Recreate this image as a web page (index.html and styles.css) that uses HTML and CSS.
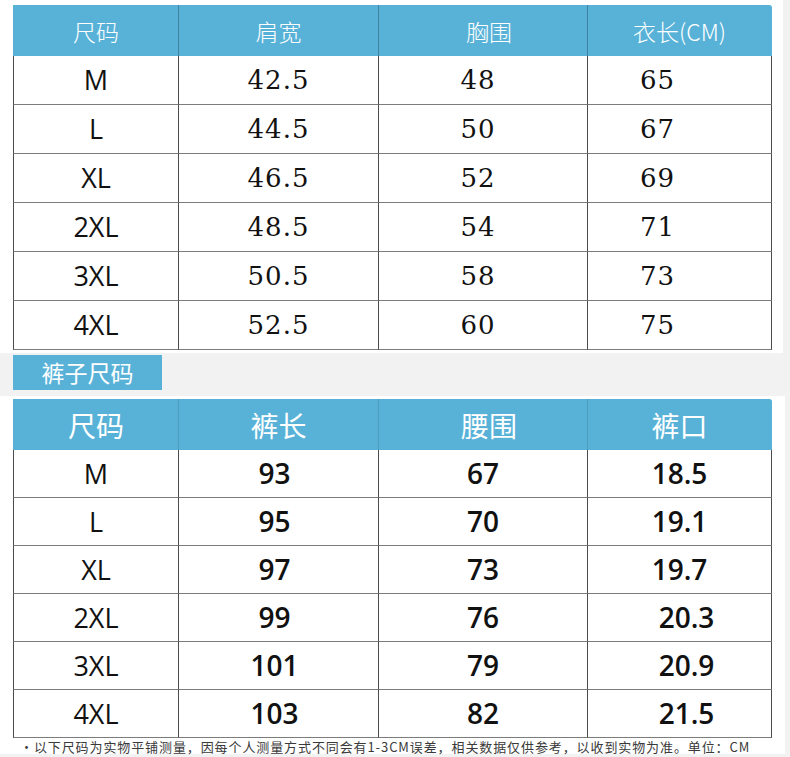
FILE: index.html
```html
<!DOCTYPE html>
<html lang="zh-CN">
<head>
<meta charset="utf-8">
<title>尺码表</title>
<link rel="stylesheet" href="styles.css">
</head>
<body>
<div class="sheet">
  <table class="grid top">
    <colgroup><col class="c1"><col class="c2"><col class="c3"><col class="c4"></colgroup>
    <thead>
      <tr><th>尺码</th><th>肩宽</th><th class="h3">胸围</th><th>衣长(CM)</th></tr>
    </thead>
    <tbody>
      <tr><td class="sz">M</td><td class="num">42.5</td><td class="num n3">48</td><td class="num n4">65</td></tr>
      <tr><td class="sz">L</td><td class="num">44.5</td><td class="num n3">50</td><td class="num n4">67</td></tr>
      <tr><td class="sz">XL</td><td class="num">46.5</td><td class="num n3">52</td><td class="num n4">69</td></tr>
      <tr><td class="sz">2XL</td><td class="num">48.5</td><td class="num n3">54</td><td class="num n4">71</td></tr>
      <tr><td class="sz">3XL</td><td class="num">50.5</td><td class="num n3">58</td><td class="num n4">73</td></tr>
      <tr><td class="sz">4XL</td><td class="num">52.5</td><td class="num n3">60</td><td class="num n4">75</td></tr>
    </tbody>
  </table>
</div>
<div class="label">裤子尺码</div>
<div class="sheet second">
  <table class="grid pants">
    <colgroup><col class="c1"><col class="c2"><col class="c3"><col class="c4"></colgroup>
    <thead>
      <tr><th>尺码</th><th>裤长</th><th class="h3">腰围</th><th>裤口</th></tr>
    </thead>
    <tbody>
      <tr><td class="sz">M</td><td class="val v2">93</td><td class="val">67</td><td class="val">18.5</td></tr>
      <tr><td class="sz">L</td><td class="val v2">95</td><td class="val">70</td><td class="val">19.1</td></tr>
      <tr><td class="sz">XL</td><td class="val v2">97</td><td class="val">73</td><td class="val">19.7</td></tr>
      <tr><td class="sz">2XL</td><td class="val v2">99</td><td class="val">76</td><td class="val v4">20.3</td></tr>
      <tr><td class="sz">3XL</td><td class="val v2">101</td><td class="val">79</td><td class="val v4">20.9</td></tr>
      <tr><td class="sz">4XL</td><td class="val v2">103</td><td class="val">82</td><td class="val v4">21.5</td></tr>
    </tbody>
  </table>
  <p class="note">·以下尺码为实物平铺测量，因每个人测量方式不同会有1-3CM误差，相关数据仅供参考，以收到实物为准。单位：CM</p>
</div>
</body>
</html>
```
FILE: styles.css
```css
html, body {
  margin: 0;
  padding: 0;
}
body {
  background: #f2f2f2;
  width: 790px;
  height: 757px;
  overflow: hidden;
  font-family: "Noto Sans", "Noto Sans CJK SC", sans-serif;
}
.sheet {
  background: #ffffff;
  width: 759px;
  padding: 5px 11px 3px 13px;
}
.second {
  margin-top: 6px;
  padding-top: 3px;
  padding-right: 13px;
  padding-bottom: 0;
}
.grid {
  border-collapse: separate;
  border-spacing: 0;
  table-layout: fixed;
  width: 759px;
}
.c1 { width: 166px; }
.c2 { width: 200px; }
.c3 { width: 209px; }
.c4 { width: 184px; }

.grid th {
  background: #58b2d8;
  color: #ffffff;
  font-family: "Noto Sans CJK SC", sans-serif;
  font-weight: 400;
  height: 51px;
  padding: 0;
  border-right: 1px solid rgba(30, 70, 90, 0.45);
  text-align: center;
  vertical-align: middle;
}
.grid th:first-child {
  border-left: 1px solid #58b2d8;
}
.grid th:last-child {
  border-right: 1px solid #58b2d8;
  border-top-right-radius: 3px;
}
.top th {
  font-size: 23px;
  font-weight: 300;
}
.pants th {
  font-size: 28px;
  border-right-color: rgba(30, 70, 90, 0.2);
}
.grid th.h3 {
  padding-left: 12px;
}

.grid td {
  height: 48px;
  padding: 0;
  line-height: 48px;
  text-align: center;
  color: #111111;
  border-right: 1px solid #4c4c4c;
  border-bottom: 1px solid #7c7c7c;
  background: #ffffff;
}
.pants td {
  height: 47px;
  line-height: 47px;
}
.grid td:first-child {
  border-left: 1px solid #4c4c4c;
}
.sz {
  font-family: "Open Sans", sans-serif;
  font-size: 27px;
}
.num {
  font-family: "DejaVu Serif", serif;
  font-size: 26px;
  letter-spacing: 1px;
}
.n3 { padding-right: 10px !important; }
.n4 { padding-right: 44px !important; }
.val {
  font-family: "Open Sans", sans-serif;
  font-weight: 600;
  font-size: 28px;
  color: #0a0a0a;
}
.v2 { padding-right: 8px !important; }
.v4 { padding-left: 14px !important; }

.label {
  margin: 2px 0 0 13px;
  width: 149px;
  height: 35px;
  line-height: 35px;
  background: #58b2d8;
  color: #ffffff;
  text-align: center;
  font-family: "Noto Sans CJK SC", sans-serif;
  font-size: 23px;
}
.note {
  margin: 2px 0 0 7px;
  font-family: "Noto Sans CJK SC", sans-serif;
  font-size: 13px;
  letter-spacing: 0.9px;
  line-height: 14px;
  color: #3a3a3a;
  white-space: nowrap;
}
```
